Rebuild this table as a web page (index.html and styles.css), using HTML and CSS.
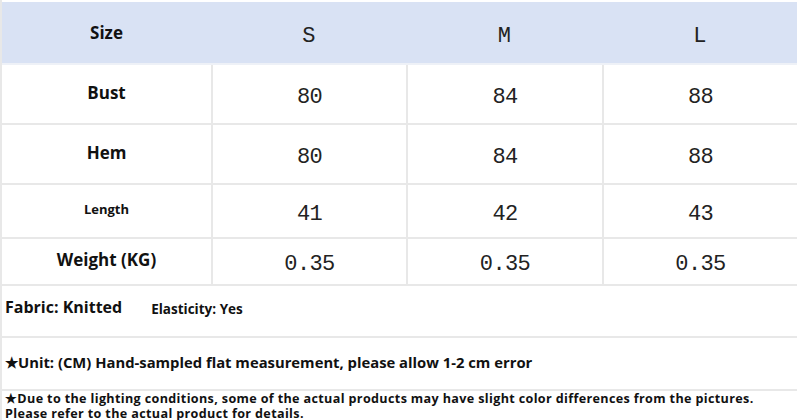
FILE: index.html
```html
<!DOCTYPE html>
<html>
<head>
<meta charset="utf-8">
<link rel="stylesheet" href="styles.css">
</head>
<body>
<div class="sheet">
  <div class="grid">
    <div class="cell head label">Size</div>
    <div class="cell head val">S</div>
    <div class="cell head val">M</div>
    <div class="cell head val">L</div>

    <div class="cell r1 label">Bust</div>
    <div class="cell r1 val">80</div>
    <div class="cell r1 val">84</div>
    <div class="cell r1 val">88</div>

    <div class="cell r2 label">Hem</div>
    <div class="cell r2 val">80</div>
    <div class="cell r2 val">84</div>
    <div class="cell r2 val">88</div>

    <div class="cell r3 label small">Length</div>
    <div class="cell r3 val">41</div>
    <div class="cell r3 val">42</div>
    <div class="cell r3 val">43</div>

    <div class="cell r4 label">Weight (KG)</div>
    <div class="cell r4 val">0.35</div>
    <div class="cell r4 val">0.35</div>
    <div class="cell r4 val">0.35</div>
  </div>
  <div class="row fabric">
    <span class="fab">Fabric: Knitted</span>
    <span class="ela">Elasticity: Yes</span>
  </div>
  <div class="row unit">★Unit: (CM) Hand-sampled flat measurement, please allow 1-2 cm error</div>
  <div class="note">★Due to the lighting conditions, some of the actual products may have slight color differences from the pictures.<br>Please refer to the actual product for details.</div>
</div>
</body>
</html>
```
FILE: styles.css
```css
html, body {
  margin: 0;
  padding: 0;
  background: #ffffff;
}
body {
  width: 800px;
  height: 420px;
  overflow: hidden;
  font-family: "Open Sans", "Liberation Sans", sans-serif;
  color: #111;
}
.sheet {
  padding: 2px 3px 0 0;
  border-left: 2px solid #e8e8e8;
}
.grid {
  display: grid;
  grid-template-columns: 209px 195px 196px 195px;
  grid-template-rows: 63px 60px 60px 54px 47px;
}
.cell {
  display: flex;
  align-items: center;
  justify-content: center;
  border-bottom: 2px solid #e8e8e8;
  border-left: 2px solid #e8e8e8;
  box-sizing: border-box;
}
.cell:nth-child(4n+1) {
  border-left: none;
}
.head {
  background: #d9e2f4;
  border-left: none;
  border-bottom: 2px solid #eef1f7;
}
.label {
  font-weight: 700;
  font-size: 17px;
  padding-bottom: 4px;
}
.label.small {
  font-size: 13px;
  padding-bottom: 4px;
}
.head.label {
  padding-bottom: 0;
}
.val {
  font-family: "Liberation Mono", "DejaVu Sans Mono", monospace;
  font-size: 22px;
  letter-spacing: -0.6px;
  color: #222;
  padding-top: 6px;
  font-weight: 400;
}
.head.val {
  padding-top: 8px;
}
.row {
  box-sizing: border-box;
  border-bottom: 2px solid #e8e8e8;
  display: flex;
  align-items: center;
  padding-left: 3px;
  font-weight: 700;
}
.fabric {
  height: 52px;
  gap: 29px;
  padding-bottom: 8px;
}
.fab {
  font-size: 16px;
}
.ela {
  font-size: 13.5px;
  padding-top: 3px;
}
.unit {
  height: 53px;
  font-size: 14.8px;
  letter-spacing: 0;
  padding-top: 0;
  padding-bottom: 4px;
}
.note {
  padding: 0 0 0 3px;
  font-size: 12.6px;
  font-weight: 700;
  line-height: 15px;
  letter-spacing: 0.35px;
}
```
